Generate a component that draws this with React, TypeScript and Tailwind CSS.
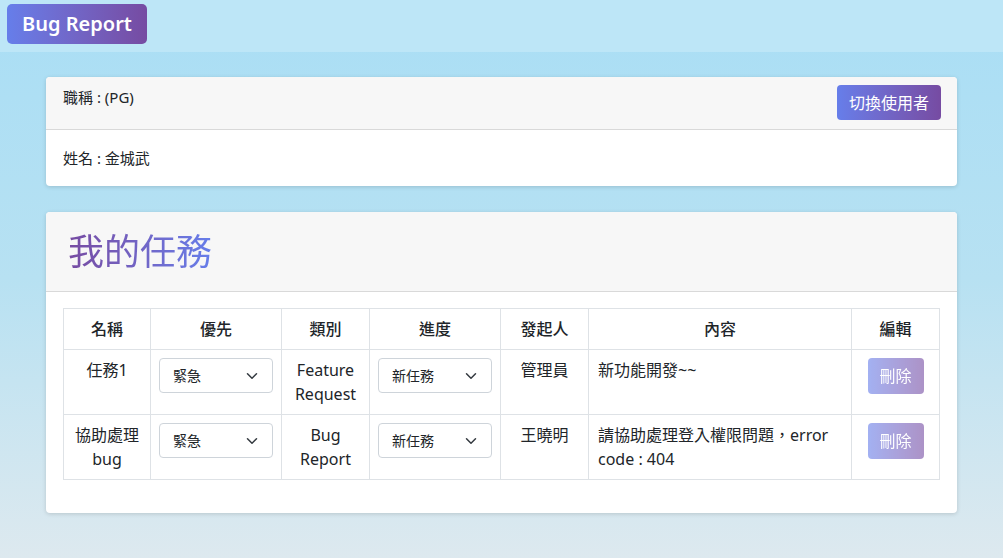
import React from 'react';

const font = "font-['Segoe_UI','Noto_Sans','Noto_Sans_CJK_TC',sans-serif]";

interface Task {
    name: string[];
    priority: string;
    category: string[];
    progress: string;
    owner: string;
    content: string[];
}

const tasks: Task[] = [
    { name: ['任務1'], priority: '緊急', category: ['Feature', 'Request'], progress: '新任務', owner: '管理員', content: ['新功能開發~~'] },
    { name: ['協助處理', 'bug'], priority: '緊急', category: ['Bug', 'Report'], progress: '新任務', owner: '王曉明', content: ['請協助處理登入權限問題，error', 'code : 404'] },
];

const Chevron = () => (
    <svg width="12" height="12" viewBox="0 0 16 16" fill="none" stroke="#343a40" strokeWidth="2" strokeLinecap="round" strokeLinejoin="round">
        <path d="M2 5l6 6 6-6" />
    </svg>
);

const FakeSelect = ({ value }: { value: string }) => (
    <div className="flex h-[35px] w-full items-center justify-between rounded border border-[#ced4da] bg-white pl-[13px] pr-[14px] text-[14px] text-[#212529]">
        <span>{value}</span>
        <Chevron />
    </div>
);

const App: React.FC = () => {
    return (
        <div className={`${font} min-h-[558px] bg-gradient-to-b from-[#a9def5] via-[#b7e1f2] to-[#dde9ef] text-[#212529]`}>
            {/* Navbar */}
            <div className="flex h-[52px] items-start bg-[#bde6f7] px-[7px] pt-[4px]">
                <div className="flex h-[40px] w-[140px] items-center justify-center rounded-[5px] bg-gradient-to-r from-[#667eea] to-[#764ba2] text-[20px] font-semibold text-white">
                    Bug Report
                </div>
            </div>

            <div className="mx-[46px] pt-[25px]">
                {/* User card */}
                <div className="rounded bg-white shadow-[0_1px_4px_rgba(0,0,0,0.15)]">
                    <div className="flex h-[53px] items-start justify-between rounded-t border-b border-[#d9d9d9] bg-[#f7f7f7] pl-[17px] pr-[16px]">
                        <div className="pt-[9px] text-[15px]">職稱 : (PG)</div>
                        <div className="mt-[8px] flex h-[35px] w-[104px] items-center justify-center rounded-[4px] bg-gradient-to-r from-[#667eea] to-[#764ba2] text-[16px] text-white">
                            切換使用者
                        </div>
                    </div>
                    <div className="flex h-[56px] items-center pl-[17px] text-[15px]">姓名 : 金城武</div>
                </div>

                {/* Task card */}
                <div className="mt-[26px] rounded bg-white shadow-[0_1px_4px_rgba(0,0,0,0.15)]">
                    <div className="flex h-[80px] items-center rounded-t border-b border-[#d9d9d9] bg-[#f7f7f7] pl-[22px]">
                        <h1 className="bg-gradient-to-r from-[#764ba2] to-[#667eea] bg-clip-text text-[36px] font-normal text-transparent">
                            我的任務
                        </h1>
                    </div>
                    <div className="px-[17px] pb-[33px] pt-[16px]">
                        <table className="w-full border-collapse text-[16px] leading-[24px]">
                            <thead>
                                <tr className="h-[41px]">
                                    <th className="w-[87px] border border-[#dee2e6] font-medium">名稱</th>
                                    <th className="w-[131px] border border-[#dee2e6] font-medium">優先</th>
                                    <th className="w-[88px] border border-[#dee2e6] font-medium">類別</th>
                                    <th className="w-[131px] border border-[#dee2e6] font-medium">進度</th>
                                    <th className="w-[88px] border border-[#dee2e6] font-medium">發起人</th>
                                    <th className="w-[263px] border border-[#dee2e6] font-medium">內容</th>
                                    <th className="w-[88px] border border-[#dee2e6] font-medium">編輯</th>
                                </tr>
                            </thead>
                            <tbody>
                                {tasks.map((t, i) => (
                                    <tr key={i} className="h-[65px] align-top">
                                        <td className="border border-[#dee2e6] px-2 pt-[8px] text-center">
                                            {t.name.map((l) => <div key={l}>{l}</div>)}
                                        </td>
                                        <td className="border border-[#dee2e6] px-[8px] pt-[8px]">
                                            <FakeSelect value={t.priority} />
                                        </td>
                                        <td className="border border-[#dee2e6] px-1 pt-[8px] text-center">
                                            {t.category.map((l) => <div key={l}>{l}</div>)}
                                        </td>
                                        <td className="border border-[#dee2e6] px-[8px] pt-[8px]">
                                            <FakeSelect value={t.progress} />
                                        </td>
                                        <td className="border border-[#dee2e6] px-2 pt-[8px] text-center">{t.owner}</td>
                                        <td className="border border-[#dee2e6] px-[9px] pt-[8px] text-left">
                                            {t.content.map((l) => <div key={l}>{l}</div>)}
                                        </td>
                                        <td className="border border-[#dee2e6] pt-[8px]">
                                            <div className="mx-auto flex h-[36px] w-[56px] items-center justify-center rounded-[4px] bg-gradient-to-r from-[#667eea] to-[#764ba2] text-white opacity-60">
                                                刪除
                                            </div>
                                        </td>
                                    </tr>
                                ))}
                            </tbody>
                        </table>
                    </div>
                </div>
            </div>
        </div>
    );
};

export default App;
